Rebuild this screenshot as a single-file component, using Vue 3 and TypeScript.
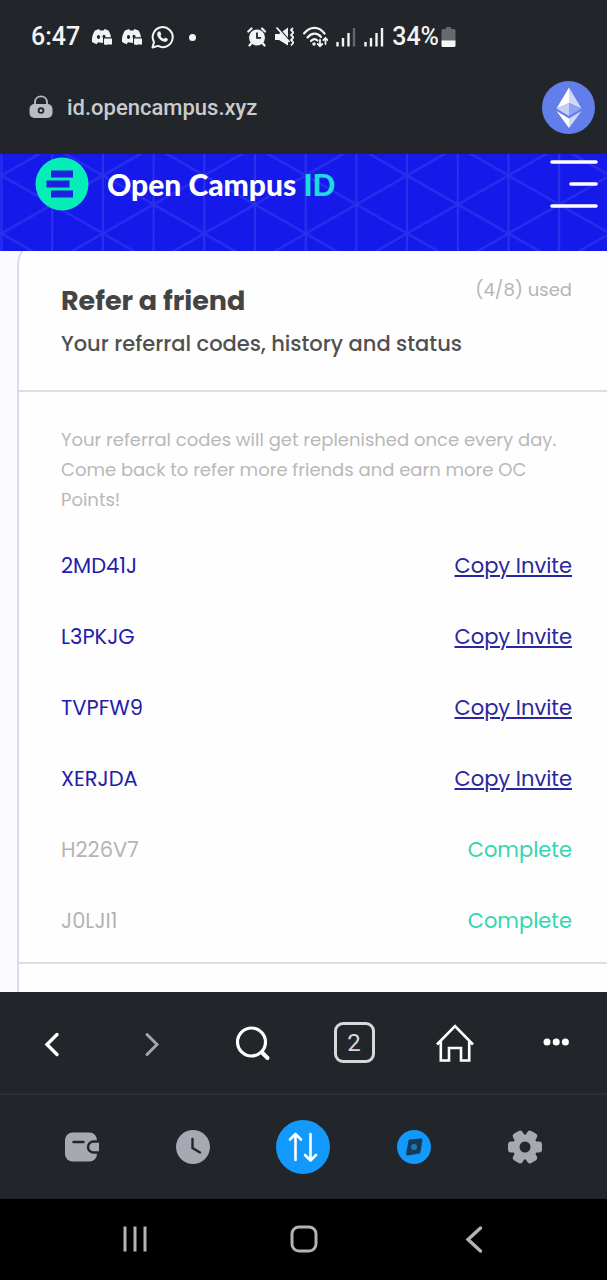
<script setup lang="ts">
interface Referral {
  code: string
  used: boolean
}

const referrals: Referral[] = [
  { code: '2MD41J', used: false },
  { code: 'L3PKJG', used: false },
  { code: 'TVPFW9', used: false },
  { code: 'XERJDA', used: false },
  { code: 'H226V7', used: true },
  { code: 'J0LJI1', used: true },
]

const gearTeeth: number[] = [0, 60, 120, 180, 240, 300]
</script>

<template>
  <div class="screen">
    <div class="status">
      <div class="status-group status-left">
        <span class="status-text">6:47</span>
        <svg v-for="n in 2" :key="n" width="22" height="20" viewBox="0 0 22 20">
          <path fill="#f1f3f5" d="M4 3.5 8 2l1 1.5h3.500L13.500 2l4 1.500c1.500 2.500 2.300 4.500 2.500 7H12v5.500l-5-.8-1.500 2L1 15C.6 10.500 1.800 6.500 4 3.500Z" />
          <ellipse cx="7.500" cy="10" rx="1.600" ry="2" fill="#22262a" />
          <ellipse cx="13" cy="9.500" rx="1.500" ry="1.700" fill="#22262a" />
          <path fill="#f1f3f5" stroke="#22262a" stroke-width="1" d="M12.500 11h9v7H16L14.500 19.500V18h-2Z" />
        </svg>
        <svg width="23" height="24" viewBox="0 0 23 24">
          <path fill="none" stroke="#f1f3f5" stroke-width="2" stroke-linejoin="round" d="M1.500 22.500 3 17A10 10 0 1 1 7 20.900Z" />
          <path fill="#f1f3f5" d="M7.500 6.500h1.700l1.200 2.900-1 1.300c.8 1.500 1.900 2.500 3.400 3.200l1.300-1.300 2.800 1.400c0 2-1.600 3-3.100 2.800-3.800-.5-7-3.700-7.600-7-.2-1.400.3-2.600 1.300-3.300Z" />
        </svg>
        <span class="dot"></span>
      </div>
      <div class="status-group">
        <svg width="20" height="20" viewBox="0 0 20 20">
          <circle cx="11" cy="10.500" r="8" fill="#f1f3f5" />
          <path fill="none" stroke="#f1f3f5" stroke-width="2.200" stroke-linecap="round" d="M2.300 4.500 5.500 1.500M19 4.500l-3-3M5.500 16l-2 2.500M16.500 16l2 2.500" />
          <path fill="none" stroke="#22262a" stroke-width="1.800" d="M11 5.500v5.300h4" />
        </svg>
        <svg width="20" height="20" viewBox="0 0 20 20">
          <path fill="#f1f3f5" d="M1 7h4l9-6.500v18L5 13H1Z" />
          <path stroke="#22262a" stroke-width="2" d="m4 1 13 14.500" />
          <path stroke="#f1f3f5" stroke-width="1.800" d="m2.500.5 13 14.500" />
          <path fill="none" stroke="#f1f3f5" stroke-width="1.800" d="m19 1-2 2 2.500 2.500L17 8l2.500 2.500L17 13l2.500 2.500-2.500 3" />
        </svg>
        <svg width="26" height="22" viewBox="0 0 26 22">
          <g fill="none" stroke="#f1f3f5" stroke-width="2.200" stroke-linecap="round">
            <path d="M2 7.500C8 0 17 0 22.500 7.500M5.500 11.500c4-5 10-5 13.500-.5M9 15c2-2.500 4.500-2.500 6.500-.5" />
            <path stroke-width="1.800" d="M18 14v6m-2.200-2L18 20.200l2.200-2.200M23.500 18v-6M21.300 14.200l2.200-2.200 2.200 2.200" />
          </g>
          <circle cx="12" cy="18" r="1.700" fill="#f1f3f5" />
        </svg>
        <svg v-for="n in 2" :key="n" width="20" height="20" viewBox="0 0 20 20">
          <path stroke="#f1f3f5" stroke-width="2.400" d="M1.500 15v4.500M7 11v8.500M12.500 6v13.500" />
          <path :class="n === 1 ? 'faint' : 'strong'" stroke-width="2.400" d="M18 1v18.500" />
        </svg>
        <span class="battery">
          <span class="status-text">34%</span>
          <svg width="15" height="20" viewBox="0 0 15 20">
            <path fill="#66696d" d="M5 0h5v2h3q1.500 0 1.500 1.500V14H.500V3.500Q.500 2 2 2h3Z" />
            <path fill="#f6f7f8" d="M.500 13.500h14v5q0 1.500-1.500 1.500H2q-1.500 0-1.500-1.500Z" />
          </svg>
        </span>
      </div>
    </div>

    <div class="address">
      <svg width="24" height="24" viewBox="0 0 24 24">
        <path fill="none" stroke="#b9bcc0" stroke-width="1.800" d="M6 11V7.500C6-.8 18-.8 18 7.500V11" />
        <rect x=".500" y="9" width="23" height="14" rx="5" fill="#b9bcc0" />
        <circle cx="12" cy="15.500" r="2.400" fill="none" stroke="#22262a" stroke-width="1.800" />
      </svg>
      <span class="url">id.opencampus.xyz</span>
      <button class="network" type="button" aria-label="Ethereum">
        <svg width="53" height="53" viewBox="0 0 53 53">
          <circle cx="26.500" cy="26.500" r="26.500" fill="#627eea" />
          <path fill="#fff" d="M27 6.500 14.500 27.500 27 22Z" />
          <path fill="#cfd8f9" d="m27 6.500 12.500 21L27 22Z" />
          <path fill="#c5cff7" d="M27 22v13l-12.500-7.500Z" />
          <path fill="#8fa3f0" d="M27 22v13l12.500-7.500Z" />
          <path fill="#fff" d="M14.500 30 27 37.500V47Z" />
          <path fill="#cfd8f9" d="M39.500 30 27 37.500V47Z" />
        </svg>
      </button>
    </div>

    <header class="brand-bar">
      <svg class="lattice" aria-hidden="true">
        <defs>
          <pattern id="lattice" width="101.400" height="58" patternUnits="userSpaceOnUse" patternTransform="translate(1.500 21.500)">
            <path fill="none" stroke="#2b30ee" stroke-width="2" d="M0 0v58M50.700 0v58M101.400 0v58M0 0l101.400 58M0 58 101.400 0" />
          </pattern>
        </defs>
        <rect width="100%" height="100%" fill="url(#lattice)" />
      </svg>
      <a class="brand" href="#">
        <svg width="54" height="54" viewBox="0 0 54 54">
          <circle cx="27" cy="27" r="26.500" fill="#06edb8" />
          <path fill="#1a22e0" d="M16 13.500h22v7H16ZM11.500 23.500h23v7h-23ZM16 33.500h22v7H16Z" />
        </svg>
        <span class="brand-name">Open Campus <span class="brand-id">ID</span></span>
      </a>
      <button class="menu" type="button" aria-label="Menu">
        <svg width="50" height="50" viewBox="0 0 50 50">
          <path stroke="#fff" stroke-width="3.600" stroke-linecap="round" d="M3 3h44M22 25h25M3 47h44" />
        </svg>
      </button>
    </header>

    <main class="content">
      <section class="card">
        <div class="card-head">
          <div>
            <h1>Refer a friend</h1>
            <p class="subtitle">Your referral codes, history and status</p>
          </div>
          <span class="used">(4/8) used</span>
        </div>
        <div class="card-body">
          <p class="note">Your referral codes will get replenished once every day. Come back to refer more friends and earn more OC Points!</p>
          <ul>
            <li v-for="item in referrals" :key="item.code" :class="{ spent: item.used }">
              <span>{{ item.code }}</span>
              <span v-if="item.used" class="complete">Complete</span>
              <a v-else href="#">Copy Invite</a>
            </li>
          </ul>
        </div>
      </section>
    </main>

    <nav class="toolbar">
      <button type="button" aria-label="Back">
        <svg width="40" height="40" viewBox="0 0 40 40"><path fill="none" stroke="#fff" stroke-width="3.400" stroke-linecap="round" d="M26 11.500 16 21.500l10 10" /></svg>
      </button>
      <button type="button" aria-label="Forward">
        <svg width="40" height="40" viewBox="0 0 40 40"><path fill="none" stroke="#a2a5a9" stroke-width="3" stroke-linecap="round" d="m15 11.500 10 10-10 10" /></svg>
      </button>
      <button type="button" aria-label="Search">
        <svg width="40" height="40" viewBox="0 0 40 40">
          <circle cx="18.500" cy="19" r="14" fill="none" stroke="#fff" stroke-width="3.200" />
          <path stroke="#fff" stroke-width="4" stroke-linecap="round" d="m29 29.500 5.500 5.500" />
        </svg>
      </button>
      <button type="button" aria-label="Tabs"><span class="tab-count">2</span></button>
      <button type="button" aria-label="Home">
        <svg width="40" height="40" viewBox="0 0 40 40"><path fill="none" stroke="#fff" stroke-width="2.600" d="M2 21.500 20 3l18 18.500M5.800 18v19.500h8.200V25h12v12.500h8.200V18" /></svg>
      </button>
      <button type="button" aria-label="More">
        <svg width="40" height="40" viewBox="0 0 40 40" fill="#fff"><circle cx="11" cy="19" r="3.500" /><circle cx="20.200" cy="19" r="3.500" /><circle cx="29.400" cy="19" r="3.500" /></svg>
      </button>
    </nav>

    <nav class="tabs">
      <button type="button" aria-label="Wallet">
        <svg width="36" height="36" viewBox="0 0 36 36">
          <rect x="1" y="3.500" width="32" height="29" rx="7.500" fill="#a6a9b1" />
          <path stroke="#22262a" stroke-width="2.400" stroke-linecap="round" d="M9.500 13h10" />
          <path fill="#a6a9b1" stroke="#22262a" stroke-width="2.400" d="M38 12.500h-8.500a5.500 5.500 0 0 0 0 11H38" />
          <path fill="#22262a" d="M35 10h1v16h-1Z" />
        </svg>
      </button>
      <button type="button" aria-label="History">
        <svg width="36" height="36" viewBox="0 0 36 36">
          <circle cx="18" cy="18" r="17" fill="#a6a9b1" />
          <path fill="none" stroke="#22262a" stroke-width="2.400" stroke-linecap="round" d="M17.500 10v9l7.500 4.500" />
        </svg>
      </button>
      <button type="button" aria-label="Swap">
        <svg width="54" height="54" viewBox="0 0 54 54">
          <circle cx="27" cy="27" r="27" fill="#1398fb" />
          <path fill="none" stroke="#fff" stroke-width="2.600" stroke-linecap="round" stroke-linejoin="round" d="M19.500 40V14m-5.500 5.500L19.500 14l5.500 5.500M34.500 14v26.500M29 35l5.500 5.500L40 35" />
        </svg>
      </button>
      <button type="button" aria-label="Discover">
        <svg width="36" height="36" viewBox="0 0 36 36">
          <circle cx="18" cy="18" r="17" fill="#1398fb" />
          <path fill="#173b58" stroke="#173b58" stroke-width="3" stroke-linejoin="round" d="M14 12 25 11l-2 12-11.500 2Z" />
          <circle cx="18" cy="18" r="3" fill="#2477b5" />
        </svg>
      </button>
      <button type="button" aria-label="Settings">
        <svg width="36" height="36" viewBox="0 0 36 36">
          <circle cx="18" cy="18" r="12.500" fill="#a6a9b1" />
          <rect v-for="angle in gearTeeth" :key="angle" x="24" y="12.500" width="11" height="11" rx="3" fill="#a6a9b1" :transform="`rotate(${angle} 18 18)`" />
          <circle cx="18" cy="18" r="5.500" fill="#22262a" />
        </svg>
      </button>
    </nav>

    <nav class="system">
      <button type="button" aria-label="Recent apps">
        <svg width="30" height="30" viewBox="0 0 30 30"><path stroke="#b4b4b4" stroke-width="3" d="M5 2.500v25M15 2.500v25M25 2.500v25" /></svg>
      </button>
      <button type="button" aria-label="Home screen">
        <svg width="30" height="30" viewBox="0 0 30 30"><rect x="3" y="3" width="24" height="24" rx="7" fill="none" stroke="#b4b4b4" stroke-width="3" /></svg>
      </button>
      <button type="button" aria-label="System back">
        <svg width="30" height="30" viewBox="0 0 30 30"><path fill="none" stroke="#b4b4b4" stroke-width="3.400" stroke-linecap="round" d="M21.500 4 9 15.500 21.500 27" /></svg>
      </button>
    </nav>
  </div>
</template>

<style>
body {
  margin: 0;
  background: #000;
}
</style>

<style scoped>
.screen {
  display: flex;
  flex-direction: column;
  min-height: 100vh;
  background: #22262a;
  font-family: Poppins, Inter, sans-serif;
}

svg {
  display: block;
  flex: none;
}

button {
  display: flex;
  align-items: center;
  justify-content: center;
  padding: 0;
  border: 0;
  background: none;
  color: inherit;
  font: inherit;
}

.status {
  display: flex;
  align-items: center;
  justify-content: space-between;
  height: 74px;
  padding: 0 151px 0 31px;
}

.status-group {
  display: flex;
  align-items: center;
  gap: 8px;
}

.status-text {
  color: #f1f3f5;
  font: 500 25px/30px Roboto, sans-serif;
}

.status-left .status-text {
  margin-right: 3px;
}

.dot {
  width: 7px;
  height: 7px;
  margin-left: 7px;
  border-radius: 50%;
  background: #f1f3f5;
}

.battery {
  display: flex;
  align-items: center;
  gap: 2px;
}

.faint {
  stroke: #63676b;
}

.strong {
  stroke: #f1f3f5;
}

.address {
  display: flex;
  align-items: center;
  gap: 14px;
  height: 66px;
  padding: 0 12px 14px 29px;
}

.url {
  flex: 1;
  padding-top: 2px;
  color: #c9cccf;
  font: 500 22px/28px Roboto, sans-serif;
}

.brand-bar {
  position: relative;
  display: flex;
  align-items: flex-start;
  justify-content: space-between;
  height: 94px;
  padding: 3px 8px 0 35px;
  background: #151aea;
}

.lattice {
  position: absolute;
  inset: 0;
  width: 100%;
  height: 100%;
}

.brand {
  position: relative;
  display: flex;
  align-items: center;
  gap: 18px;
  color: #fff;
  text-decoration: none;
}

.brand-name {
  font: 900 30px/36px Lato, sans-serif;
}

.brand-id {
  color: #1cdcdc;
}

.menu {
  position: relative;
  padding-top: 2px;
}

.content {
  flex: 1;
  display: flex;
  overflow: hidden;
  background: #fafaff;
}

.card {
  flex: 1;
  margin: -12px 0 0 17px;
  border: solid #dcdcec;
  border-width: 2px 0 0 2px;
  border-top-left-radius: 26px;
  background: #fefefe;
}

.card-head {
  display: flex;
  justify-content: space-between;
  padding: 38px 35px 26px 42px;
  border-bottom: 2px solid #dedee2;
}

h1 {
  margin: 0;
  color: #444;
  font-size: 27px;
  line-height: 44px;
  font-weight: 700;
}

.subtitle {
  margin: 0;
  padding-top: 1px;
  color: #505050;
  font-size: 21px;
  line-height: 40px;
  font-weight: 500;
}

.used {
  color: #b4b4b4;
  font-size: 18px;
  line-height: 22px;
}

.card-body {
  padding: 33px 35px 6px 42px;
  border-bottom: 2px solid #dedee2;
}

.note {
  margin: 0 0 15px;
  color: #b8b8b8;
  font-size: 18px;
  line-height: 30px;
}

ul {
  margin: 0;
  padding: 0;
  list-style: none;
}

li {
  display: flex;
  align-items: center;
  justify-content: space-between;
  height: 71px;
  color: #2520a8;
  font-size: 21px;
  line-height: 30px;
}

li a {
  color: #2a279c;
  text-decoration-thickness: 2px;
  text-underline-offset: 2px;
}

.spent {
  color: #b4b4b4;
}

.complete {
  color: #35d5b2;
}

.toolbar {
  display: grid;
  grid-template-columns: repeat(6, 1fr);
  height: 101px;
  border-bottom: 2px solid #2c3036;
}

.tab-count {
  box-sizing: border-box;
  width: 41px;
  height: 41px;
  border: 3px solid #d6d8db;
  border-radius: 9px;
  color: #d6d8db;
  font: 400 24px/36px Roboto, sans-serif;
}

.tabs {
  display: grid;
  grid-template-columns: repeat(5, 1fr);
  height: 104px;
  padding: 0 27px;
}

.system {
  display: grid;
  grid-template-columns: repeat(3, 1fr);
  height: 79px;
  padding: 0 48px 2px 50px;
  background: #000;
}
</style>
